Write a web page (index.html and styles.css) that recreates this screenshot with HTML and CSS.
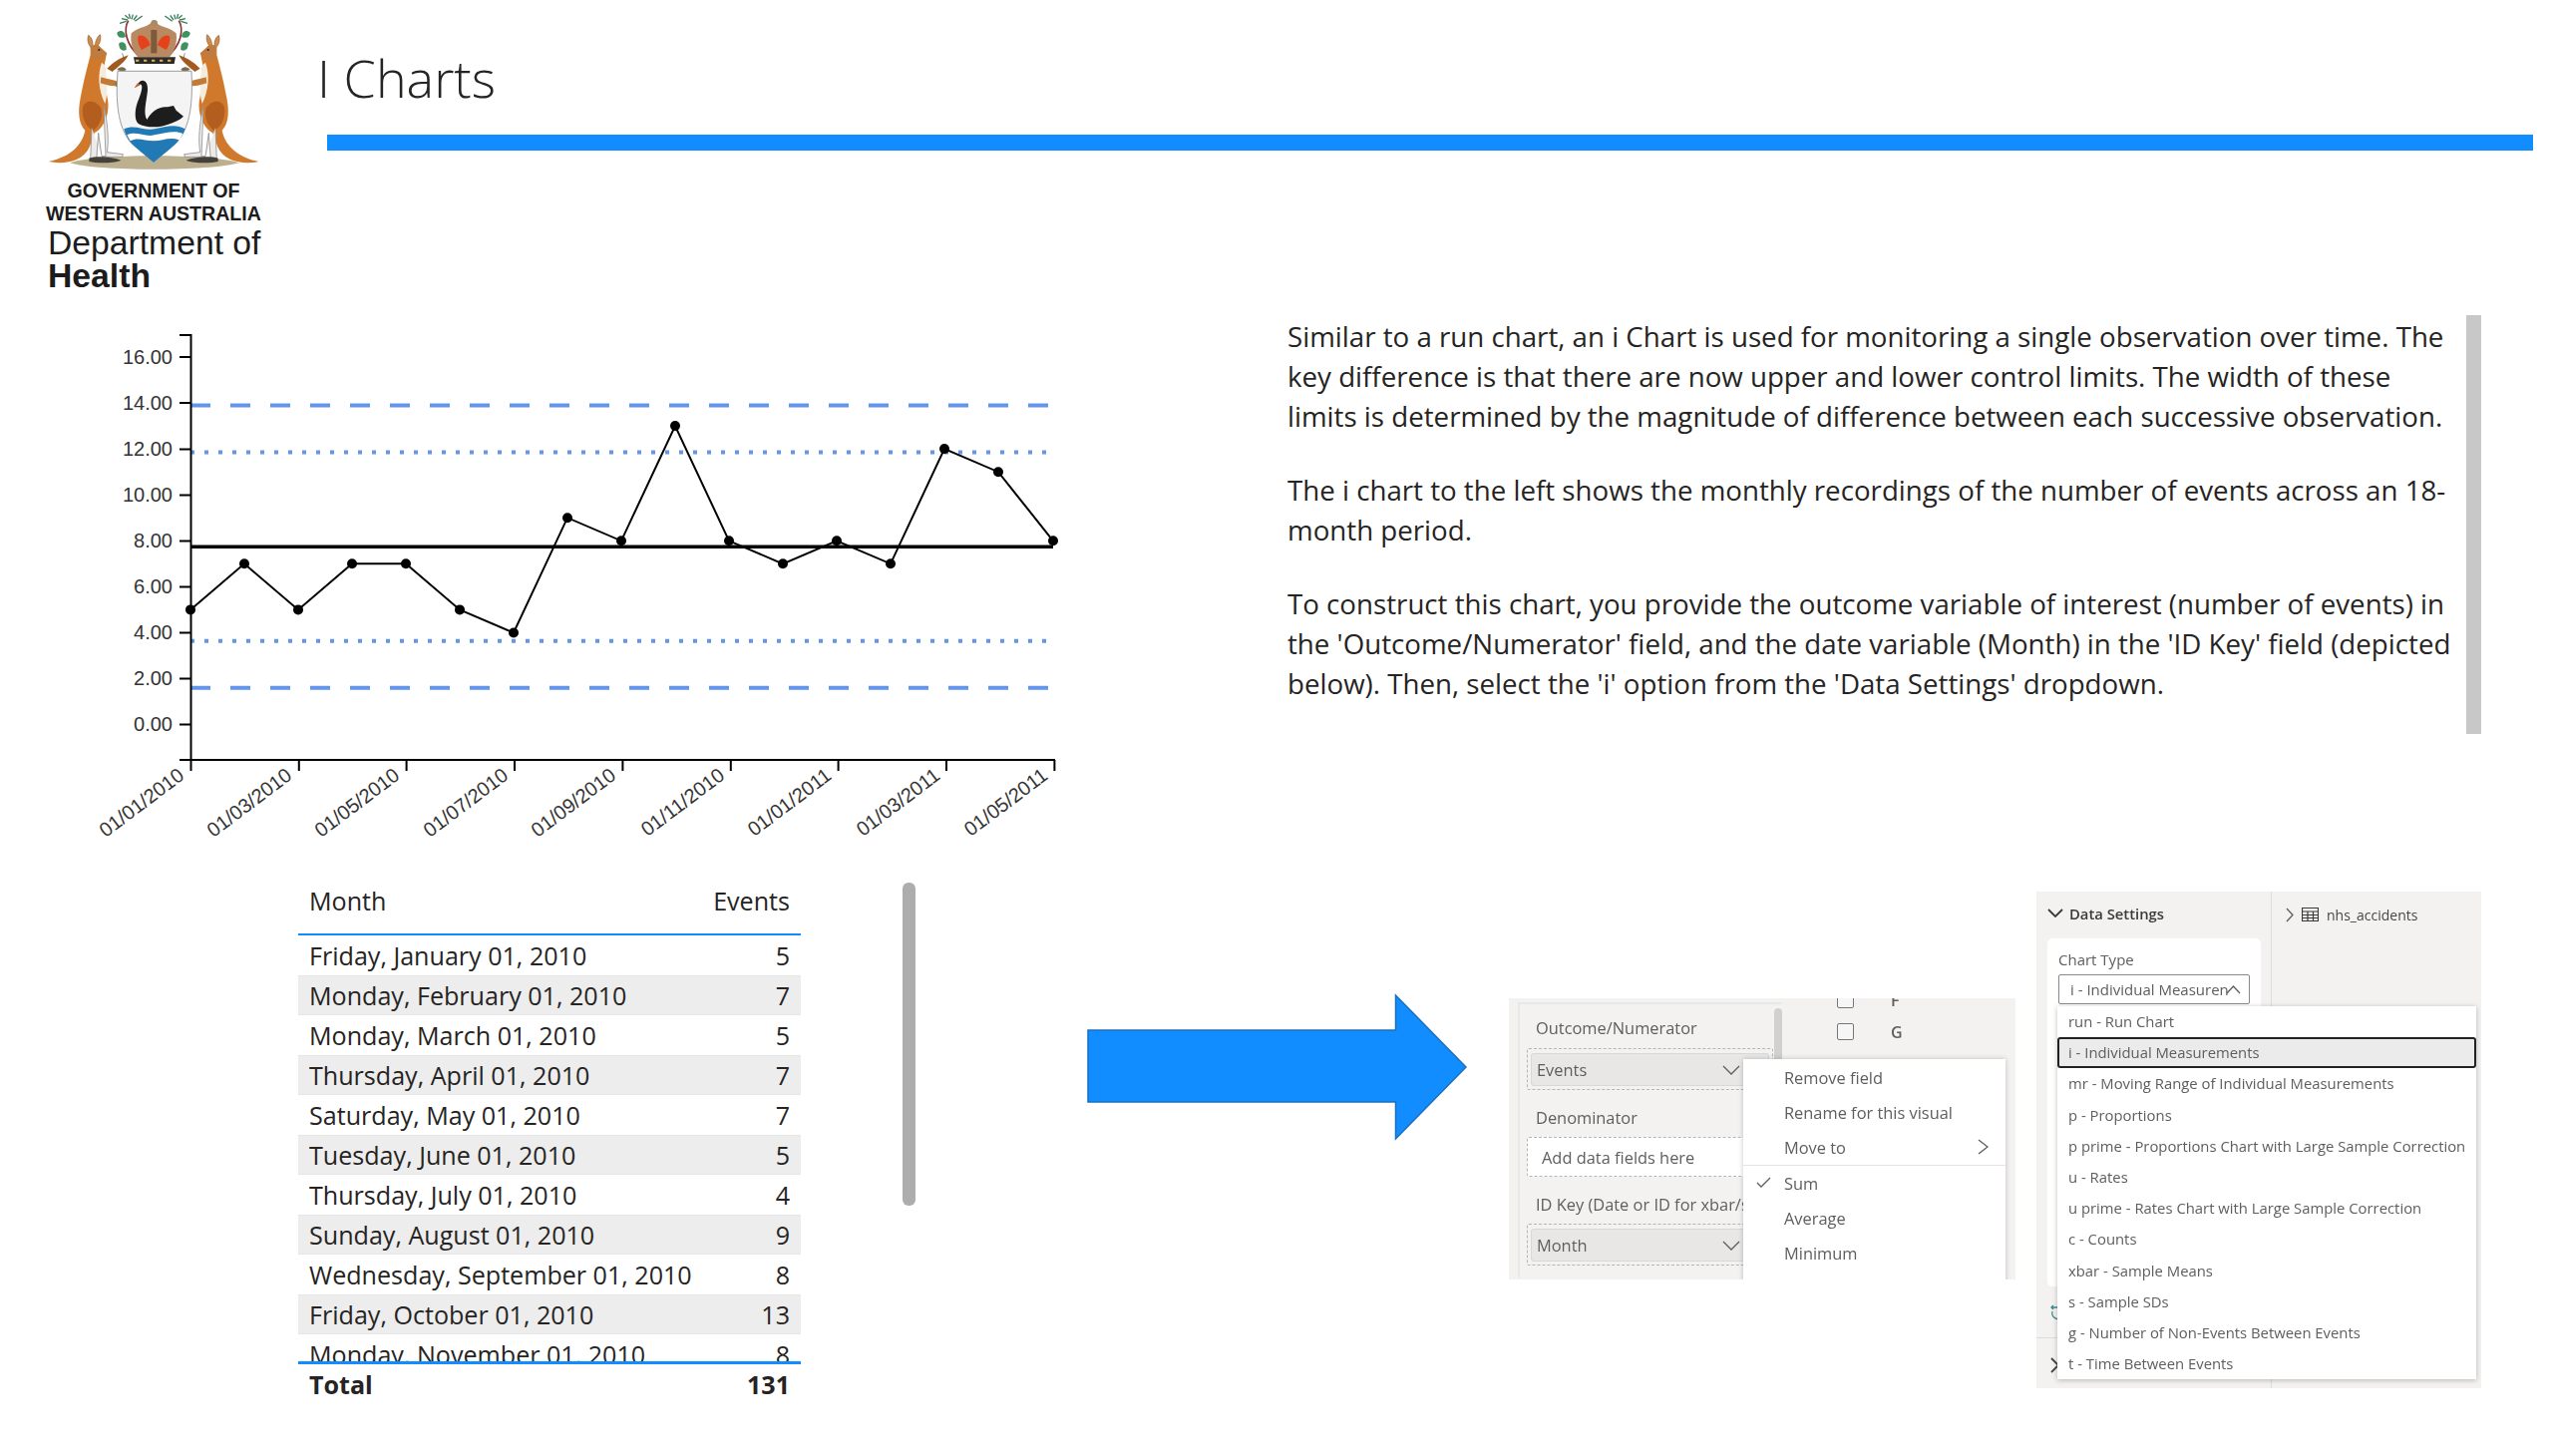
FILE: index.html
```html
<!DOCTYPE html>
<html>
<head>
  <title>I Charts</title>
  <link rel="stylesheet" href="styles.css">
</head>
<body>
  <div class="page">
    <!-- header -->
    <div class="header">
      <div class="logo">
        <svg class="crest" width="250" height="175" viewBox="0 0 750 525">
          <defs>
            <g id="roo">
              <path fill="#d0792c" d="M182 165C172 205 162 240 152 295C143 340 148 375 166 392C158 432 128 470 56 486C100 496 162 486 180 440L194 400C224 385 244 335 232 290C228 262 230 225 224 195L230 165L205 135L182 140Z"/>
              <path fill="#a9541a" opacity="0.75" d="M160 320C168 300 196 300 212 322C222 345 214 372 192 392C172 388 152 352 160 320Z"/>
              <path fill="#f6ecdc" d="M216 188C204 220 204 268 226 312C236 280 232 225 224 195Z"/>
              <path fill="#cf8c4c" stroke="#8a5a30" stroke-width="2" d="M176 106C170 122 178 142 188 144C191 128 187 114 176 106ZM211 104C200 114 195 128 197 142C208 138 216 120 211 104Z"/>
              <path fill="#c07c3e" d="M182 142C190 130 206 132 214 144L232 160C230 170 218 172 208 174L188 182Z"/>
              <circle cx="208" cy="150" r="3" fill="#2a2018"/>
              <path fill="#a35a20" d="M232 206C250 190 262 178 296 166C285 188 262 204 248 216Z"/>
              <path fill="#c27a34" d="M214 232C230 238 250 240 272 246L270 260C248 260 228 256 212 250Z"/>
              <path fill="#ecebe9" stroke="#8f8f8f" stroke-width="2.5" d="M186 385L182 482L200 482L206 400L216 470L228 470L222 318C234 370 238 420 232 458L280 464L278 472L216 472"/>
              <path fill="#44403a" d="M178 476C200 468 250 472 274 482C250 492 200 492 178 486Z"/>
              <path fill="#7a6a50" d="M262 210C268 200 284 198 290 210L280 216ZM256 250L274 238L276 262L260 262Z"/>
            </g>
            <g id="plant">
              <path fill="none" stroke="#8c2f2f" stroke-width="5" d="M296 62C280 90 290 135 328 168"/>
              <path fill="none" stroke="#3a7d5a" stroke-width="4" d="M270 70L290 64M276 56L294 60M286 46L298 56M298 42L302 56M310 44L306 58M322 46L312 60M338 48L316 64"/>
              <path fill="#3f9160" d="M262 98C272 88 286 92 288 110C276 118 262 112 262 98ZM268 130C280 122 292 130 290 150C278 156 266 148 268 130Z"/>
              <path fill="none" stroke="#555" stroke-width="2" d="M278 160L282 175"/>
            </g>
          </defs>
          <!-- ground -->
          <path fill="#bdb08e" d="M120 490C200 462 540 462 630 490C540 516 200 516 120 490Z"/>
          <use href="#roo"/>
          <use href="#roo" transform="translate(744 0) scale(-1 1)"/>
          <use href="#plant"/>
          <use href="#plant" transform="translate(744 0) scale(-1 1)"/>
          <!-- crown -->
          <path fill="#b98a62" d="M305 100C330 78 355 85 372 60C390 85 415 78 440 100C445 130 432 160 420 172L325 172C312 160 300 130 305 100Z"/>
          <circle cx="374" cy="70" r="10" fill="#a98a66"/>
          <path fill="#e5421c" d="M326 108C340 102 356 112 362 136L336 150C328 138 322 122 326 108ZM420 108C406 102 390 112 384 136L410 150C418 138 424 122 420 108Z"/>
          <path fill="#7e5a3a" d="M364 90H382V160H364Z"/>
          <path fill="#2d2a26" d="M312 172H438L434 192H316Z"/>
          <path fill="none" stroke="#d6b55a" stroke-width="6" stroke-dasharray="10 14" d="M318 182H434"/>
          <!-- shield -->
          <path fill="#f4f4f4" stroke="#9d9d9d" stroke-width="3" d="M264 214H486C490 300 486 380 440 430L372 488L304 430C262 380 258 300 264 214Z"/>
          <path fill="#2179b5" d="M283 388C315 372 345 395 375 388C410 380 440 372 467 388C458 415 440 432 425 445L372 488L320 445C305 432 290 415 283 388Z"/>
          <path fill="#fff" d="M292 406C320 392 345 414 375 406C410 398 440 392 460 402L450 422C420 410 400 424 372 424C345 424 325 412 302 424Z"/>
          <!-- swan -->
          <path fill="#1d1d1d" d="M314 265L330 246C342 236 356 246 354 272C350 308 340 340 352 360C364 335 392 318 414 322L432 318L440 332L462 350C450 362 432 368 416 374C392 384 350 386 326 372C312 358 316 322 328 296C336 276 340 258 334 254C328 252 322 260 314 265Z"/>
          <path fill="#c4622a" d="M314 265L324 250L332 256Z"/>
        </svg>
        <div class="gov">GOVERNMENT OF<br>WESTERN AUSTRALIA</div>
        <div class="dept">Department of<br><b>Health</b></div>
      </div>
      <div class="title-wrap">
        <h1>I Charts</h1>
        <div class="title-bar"></div>
      </div>
    </div>

    <!-- chart and explanation -->
    <div class="middle">
      <svg class="chart" width="1000" height="530" viewBox="80 330 1000 530">
        <g class="limits">
          <path class="dash" d="M191 406.4H1052M191 689.8H1052"/>
          <path class="dot" d="M191 453.6H1052M191 642.7H1052"/>
        </g>
        <path class="mean" d="M191 548.3H1056"/>
        <path class="series" d="M191 611.4L245 565.3L299 611.4L353 565.3L407 565.3L461 611.4L515 634.5L569 519.2L623 542.3L677 427L731 542.3L785 565.3L839 542.3L893 565.3L947 450.1L1001 473.2L1056 542.3"/>
        <g class="points">
          <circle cx="191" cy="611.4" r="5"/><circle cx="245" cy="565.3" r="5"/><circle cx="299" cy="611.4" r="5"/>
          <circle cx="353" cy="565.3" r="5"/><circle cx="407" cy="565.3" r="5"/><circle cx="461" cy="611.4" r="5"/>
          <circle cx="515" cy="634.5" r="5"/><circle cx="569" cy="519.2" r="5"/><circle cx="623" cy="542.3" r="5"/>
          <circle cx="677" cy="427" r="5"/><circle cx="731" cy="542.3" r="5"/><circle cx="785" cy="565.3" r="5"/>
          <circle cx="839" cy="542.3" r="5"/><circle cx="893" cy="565.3" r="5"/><circle cx="947" cy="450.1" r="5"/>
          <circle cx="1001" cy="473.2" r="5"/><circle cx="1056" cy="542.3" r="5"/>
        </g>
        <path class="axis" d="M180 336H191.5V762M180 762H1058M191.5 762V773M299.8 762V773M407.6 762V773M516 762V773M624.4 762V773M732.8 762V773M840.6 762V773M949 762V773M1057.4 762V773M180 358H191M180 404H191M180 450.5H191M180 496.5H191M180 542.5H191M180 588.5H191M180 634.5H191M180 680.5H191M180 726.5H191"/>
        <g class="y-labels">
          <text x="173" y="365">16.00</text><text x="173" y="411">14.00</text><text x="173" y="457">12.00</text>
          <text x="173" y="503">10.00</text><text x="173" y="549">8.00</text><text x="173" y="595">6.00</text>
          <text x="173" y="641">4.00</text><text x="173" y="687">2.00</text><text x="173" y="733">0.00</text>
        </g>
        <g class="x-labels">
          <text transform="translate(186 780) rotate(-37)">01/01/2010</text>
          <text transform="translate(294 780) rotate(-37)">01/03/2010</text>
          <text transform="translate(402 780) rotate(-37)">01/05/2010</text>
          <text transform="translate(511 780) rotate(-37)">01/07/2010</text>
          <text transform="translate(619 780) rotate(-37)">01/09/2010</text>
          <text transform="translate(728 780) rotate(-37)">01/11/2010</text>
          <text transform="translate(835 780) rotate(-37)">01/01/2011</text>
          <text transform="translate(944 780) rotate(-37)">01/03/2011</text>
          <text transform="translate(1052 780) rotate(-37)">01/05/2011</text>
        </g>
      </svg>
      <div class="explain">
        <div class="explain-text">
          <p>Similar to a run chart, an i Chart is used for monitoring a single observation over time. The<br>key difference is that there are now upper and lower control limits. The width of these<br>limits is determined by the magnitude of difference between each successive observation.</p>
          <p>The i chart to the left shows the monthly recordings of the number of events across an 18-<br>month period.</p>
          <p>To construct this chart, you provide the outcome variable of interest (number of events) in<br>the 'Outcome/Numerator' field, and the date variable (Month) in the 'ID Key' field (depicted<br>below). Then, select the 'i' option from the 'Data Settings' dropdown.</p>
        </div>
        <div class="explain-scroll"></div>
      </div>
    </div>

    <!-- table, arrow and screenshots -->
    <div class="bottom">
      <div class="table">
        <div class="t-head"><span>Month</span><span>Events</span></div>
        <div class="t-body">
          <div class="t-row"><span>Friday, January 01, 2010</span><span>5</span></div>
          <div class="t-row"><span>Monday, February 01, 2010</span><span>7</span></div>
          <div class="t-row"><span>Monday, March 01, 2010</span><span>5</span></div>
          <div class="t-row"><span>Thursday, April 01, 2010</span><span>7</span></div>
          <div class="t-row"><span>Saturday, May 01, 2010</span><span>7</span></div>
          <div class="t-row"><span>Tuesday, June 01, 2010</span><span>5</span></div>
          <div class="t-row"><span>Thursday, July 01, 2010</span><span>4</span></div>
          <div class="t-row"><span>Sunday, August 01, 2010</span><span>9</span></div>
          <div class="t-row"><span>Wednesday, September 01, 2010</span><span>8</span></div>
          <div class="t-row"><span>Friday, October 01, 2010</span><span>13</span></div>
          <div class="t-row"><span>Monday, November 01, 2010</span><span>8</span></div>
        </div>
        <div class="t-foot"><span>Total</span><span>131</span></div>
      </div>
      <div class="table-scroll"></div>

      <svg class="arrow" width="384" height="148" viewBox="0 0 384 148">
        <path d="M1 37H309.5V2L380 74L309.5 146V109H1Z"/>
      </svg>

      <!-- field wells screenshot -->
      <div class="shot fields">
        <div class="pane">
          <div class="well-label">Outcome/Numerator</div>
          <div class="well"><div class="pill">Events<svg class="chev" width="18" height="10" viewBox="0 0 18 10"><path d="M1 1L9 9L17 1"/></svg></div></div>
          <div class="well-label">Denominator</div>
          <div class="well empty">Add data fields here</div>
          <div class="well-label">ID Key (Date or ID for xbar/s charts)</div>
          <div class="well"><div class="pill">Month<svg class="chev" width="18" height="10" viewBox="0 0 18 10"><path d="M1 1L9 9L17 1"/></svg></div></div>
          <div class="pane-scroll"></div>
        </div>
        <div class="filters">
          <div class="filter clipped"><span class="box"></span><span>F</span></div>
          <div class="filter"><span class="box"></span><span>G</span></div>
        </div>
        <div class="menu">
          <div class="menu-item">Remove field</div>
          <div class="menu-item">Rename for this visual</div>
          <div class="menu-item sep">Move to<svg class="menu-arrow" width="11" height="16" viewBox="0 0 11 16"><path d="M1 1L10 8L1 15"/></svg></div>
          <div class="menu-item"><svg class="tick" width="15" height="11" viewBox="0 0 15 11"><path d="M1 6L5 10L14 1"/></svg>Sum</div>
          <div class="menu-item">Average</div>
          <div class="menu-item">Minimum</div>
        </div>
      </div>

      <!-- data settings screenshot -->
      <div class="shot settings">
        <div class="settings-left">
          <div class="ds-head"><svg class="ds-chev" width="16" height="10" viewBox="0 0 16 10"><path d="M1 1L8 8L15 1"/></svg>Data Settings</div>
          <div class="card">
            <div class="card-label">Chart Type</div>
            <div class="select">i - Individual Measuren<svg class="caret" width="15" height="9" viewBox="0 0 15 9"><path d="M1 8L7.5 1L14 8"/></svg></div>
          </div>
          <div class="back-row">
            <svg class="undo" width="9" height="16" viewBox="0 0 9 16"><path d="M8 3H1M3 1L1 3L3 5M2 7C1 11 3 14 8 15"/></svg>
          </div>
          <div class="next-row">
            <svg class="next" width="9" height="16" viewBox="0 0 9 16"><path d="M1 1L8 8L1 15"/></svg>
          </div>
        </div>
        <div class="settings-right">
          <svg class="tbl-chev" width="8" height="15" viewBox="0 0 8 15"><path d="M1 1L7 7.5L1 14"/></svg>
          <svg class="tbl-icon" width="17" height="14" viewBox="0 0 17 14"><path d="M.5 .5H16.5V13.5H.5ZM.5 4H16.5M.5 7.5H16.5M.5 10.5H16.5M6 4V13.5M11.5 4V13.5"/></svg>
          <span>nhs_accidents</span>
        </div>
        <div class="dropdown">
          <div class="opt">run - Run Chart</div>
          <div class="opt active">i - Individual Measurements</div>
          <div class="opt">mr - Moving Range of Individual Measurements</div>
          <div class="opt">p - Proportions</div>
          <div class="opt">p prime - Proportions Chart with Large Sample Correction</div>
          <div class="opt">u - Rates</div>
          <div class="opt">u prime - Rates Chart with Large Sample Correction</div>
          <div class="opt">c - Counts</div>
          <div class="opt">xbar - Sample Means</div>
          <div class="opt">s - Sample SDs</div>
          <div class="opt">g - Number of Non-Events Between Events</div>
          <div class="opt">t - Time Between Events</div>
        </div>
      </div>
    </div>
  </div>
</body>
</html>
```
FILE: styles.css
```css
body {
  margin: 0;
  background-color: #fff;
  font-family: "Open Sans", "Noto Sans", sans-serif;
  color: #252423;
}

.page {
  width: 2560px;
  height: 1460px;
  overflow: hidden;
}

/* Header */
.header {
  display: flex;
  height: 316px;
}

.logo {
  width: 328px;
  flex: none;
  padding: 0 0 0 30px;
  box-sizing: border-box;
}

.crest {
  display: block;
  filter: blur(0.5px);
}

.gov {
  width: 248px;
  margin-top: 5px;
  text-align: center;
  font-family: "Liberation Sans", sans-serif;
  font-weight: bold;
  font-size: 19.6px;
  line-height: 22.5px;
  color: #1c1c1c;
}

.dept {
  margin: 2px 0 0 18px;
  font-family: "Liberation Sans", sans-serif;
  font-size: 33.7px;
  line-height: 33px;
  color: #1c1c1c;
}

.title-wrap {
  flex: 1;
  padding-right: 20px;
}

h1 {
  margin: 42px 0 0 -10px;
  font-size: 52px;
  font-weight: 300;
  line-height: 72px;
}

.title-bar {
  height: 16px;
  margin-top: 21px;
  background-color: #118dff;
}

/* Middle row */
.middle {
  display: flex;
  height: 569px;
}

.chart {
  flex: none;
  margin: 14px 0 0 80px;
}

.limits path {
  fill: none;
  stroke: #6495ed;
  stroke-width: 4;
}

.dash { stroke-dasharray: 20 20; }
.dot { stroke-dasharray: 4 10; }

.mean {
  fill: none;
  stroke: #000;
  stroke-width: 3.4;
}

.series {
  fill: none;
  stroke: #000;
  stroke-width: 2;
}

.axis {
  fill: none;
  stroke: #000;
  stroke-width: 2;
}

.y-labels text, .x-labels text {
  font-family: "Liberation Sans", sans-serif;
  font-size: 20px;
  fill: #333;
  text-anchor: end;
}

.explain {
  display: flex;
  margin-left: 211px;
}

.explain-text {
  width: 1182px;
  font-size: 27.7px;
  line-height: 40px;
  white-space: nowrap;
}

.explain-text p {
  margin: 1px 0 34px;
}

.explain-scroll {
  width: 15px;
  height: 420px;
  background-color: #c8c8c8;
}

/* Bottom row */
.bottom {
  position: relative;
  display: flex;
  height: 575px;
}

.table {
  width: 504px;
  margin-left: 299px;
  flex: none;
  font-size: 25.1px;
}

.t-head, .t-row, .t-foot {
  display: flex;
  justify-content: space-between;
  padding: 0 11px;
}

.t-head {
  height: 53px;
  box-sizing: border-box;
  border-bottom: 2px solid #118dff;
  line-height: 36px;
}

.t-body {
  height: 427px;
  overflow: hidden;
}

.t-row {
  height: 40px;
  line-height: 40px;
}

.t-row:nth-child(even) {
  background-color: #ededed;
  box-shadow: inset 0 1px #e6e6e6, inset 0 -1px #e6e6e6;
}

.t-foot {
  border-top: 3px solid #118dff;
  font-weight: 700;
  line-height: 40px;
}

.table-scroll {
  width: 13px;
  height: 324px;
  margin-left: 102px;
  flex: none;
  background-color: #adadad;
  border-radius: 6px;
}

.arrow {
  flex: none;
  margin: 111px 0 0 172px;
}

.arrow path {
  fill: #118dff;
  stroke: #1a6fc0;
  stroke-width: 1.5;
}

/* Pasted screenshots */
.shot {
  position: absolute;
  background-color: #f3f2f1;
  overflow: hidden;
  color: #605e5c;
  filter: blur(0.45px);
}

.fields {
  left: 1513px;
  top: 116px;
  width: 508px;
  height: 282px;
  display: flex;
  font-size: 16.4px;
}

.pane {
  position: relative;
  width: 264px;
  height: 276px;
  margin: 4px 0 0 9px;
  padding: 0 0 0 7px;
  box-sizing: border-box;
  flex: none;
  border-top: 2px solid #e8e8e8;
  border-left: 2px solid #e8e8e8;
  white-space: nowrap;
}

.well-label {
  width: 208px;
  height: 22px;
  overflow: hidden;
  line-height: 22px;
  margin: 17px 0 8px 9px;
}

.well-label:first-child {
  margin: 13px 0 9px 9px;
}

.well {
  width: 247px;
  height: 42px;
  padding: 5px 4px;
  box-sizing: border-box;
  border: 1px dashed #b5b5b5;
  border-radius: 2px;
}

.well.empty {
  height: 40px;
  padding: 0 0 0 14px;
  background-color: #fff;
  line-height: 40px;
}

.pill {
  display: flex;
  align-items: center;
  justify-content: space-between;
  height: 31px;
  padding: 0 28px 0 5px;
  background-color: #e8e7e6;
  border-radius: 2px;
  box-shadow: 0 0 0 1px #d8d8d8;
}

.chev, .menu-arrow, .tick, .ds-chev, .caret, .undo, .next, .tbl-chev {
  fill: none;
  stroke: #605e5c;
  stroke-width: 1.3;
}

.pane-scroll {
  position: absolute;
  top: 4px;
  right: -1px;
  width: 8px;
  height: 70px;
  background-color: #d2d0ce;
  border-radius: 4px;
}

.filters {
  margin: -7px 0 0 56px;
}

.filter {
  display: flex;
  align-items: center;
  gap: 37px;
  height: 17px;
  margin-top: 8px;
  font-size: 16px;
  font-weight: 600;
}

.filter.clipped { margin-top: 0; margin-bottom: 15px; }

.box {
  width: 15px;
  height: 15px;
  border: 1px solid #777;
  border-radius: 2px;
  background-color: #f6f6f6;
}

.menu {
  position: absolute;
  left: 235px;
  top: 61px;
  width: 263px;
  height: 240px;
  padding-top: 1px;
  background-color: #fff;
  box-shadow: 0 0 5px rgba(0, 0, 0, 0.22);
}

.menu-item {
  position: relative;
  height: 35px;
  padding-left: 41px;
  line-height: 35px;
}

.menu-item.sep {
  border-bottom: 1px solid #e4e4e4;
}

.menu-arrow {
  position: absolute;
  right: 17px;
  top: 9px;
}

.tick {
  position: absolute;
  left: 13px;
  top: 11px;
}

.settings {
  left: 2042px;
  top: 9px;
  width: 446px;
  height: 498px;
  font-size: 14.85px;
  display: flex;
}

.settings-left {
  position: relative;
  width: 235px;
  flex: none;
  border-right: 1px solid #dcdcdc;
}

.ds-head {
  display: flex;
  align-items: center;
  gap: 6px;
  height: 22px;
  margin: 11px 0 0 11px;
  font-weight: 600;
  font-size: 14.8px;
  color: #3b3a39;
}

.ds-chev { stroke: #3b3a39; stroke-width: 1.8; }

.card {
  width: 214px;
  height: 349px;
  margin: 14px 0 0 11px;
  padding: 11px 11px;
  box-sizing: border-box;
  background-color: #fff;
  border-radius: 5px;
}

.card-label {
  height: 25px;
  line-height: 20px;
  font-size: 15px;
}

.select {
  position: relative;
  height: 30px;
  padding-left: 11px;
  box-sizing: border-box;
  border: 1px solid #8a8886;
  border-radius: 2px;
  line-height: 28px;
  font-size: 15px;
  overflow: hidden;
  white-space: nowrap;
}

.caret {
  position: absolute;
  right: 8px;
  top: 10px;
}

.back-row {
  height: 52px;
  border-bottom: 1px solid #dcdcdc;
  padding: 18px 0 0 14px;
  box-sizing: border-box;
}

.undo { stroke: #3d8a8a; }

.next-row {
  padding: 19px 0 0 14px;
}

.next { stroke: #444; stroke-width: 1.8; }

.settings-right {
  display: flex;
  align-items: center;
  gap: 8px;
  height: 22px;
  margin: 12px 0 0 14px;
  font-size: 14px;
  color: #484644;
}

.tbl-icon {
  fill: none;
  stroke: #3b3a39;
  stroke-width: 1.2;
}

.dropdown {
  position: absolute;
  left: 21px;
  top: 115px;
  width: 420px;
  height: 374px;
  box-sizing: border-box;
  background-color: #fff;
  box-shadow: 0 1px 5px rgba(0, 0, 0, 0.25);
}

.opt {
  height: 31.2px;
  padding-left: 11px;
  line-height: 31px;
  white-space: nowrap;
}

.opt.active {
  box-sizing: border-box;
  padding-left: 9px;
  background-color: #ebebeb;
  border: 2px solid #222;
  border-radius: 3px;
  line-height: 27px;
}
```
